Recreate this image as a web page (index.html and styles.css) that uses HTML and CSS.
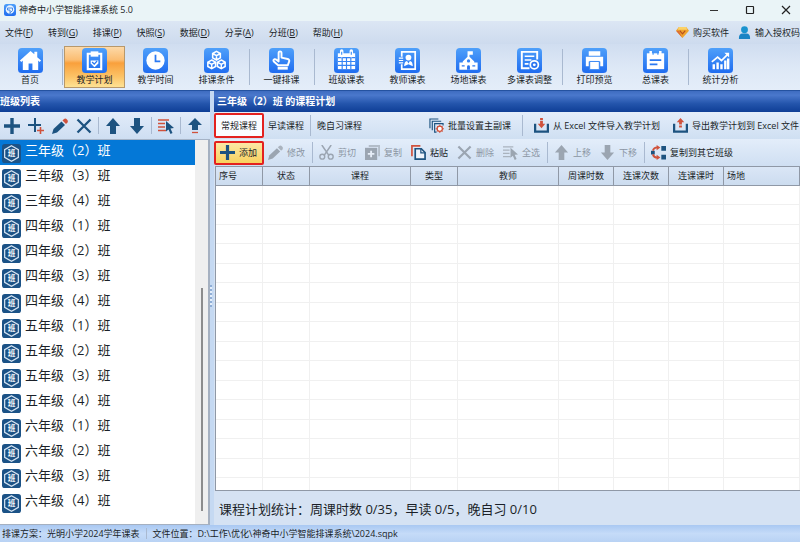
FILE: index.html
```
<!DOCTYPE html>
<html lang="zh-CN">
<head>
    <meta charset="UTF-8">
    <meta name="viewport" content="width=device-width, initial-scale=1.0">
    <title>神奇中小学智能排课系统 5.0</title>
    <link rel="stylesheet" href="styles.css">
</head>
<body>

    <!-- Shared icons -->
    <svg class="defs" width="0" height="0" aria-hidden="true">
        <linearGradient id="blue" x1="0" y1="0" x2="0" y2="1">
            <stop offset="0" stop-color="#4fa0fa"/>
            <stop offset="1" stop-color="#1f6cf0"/>
        </linearGradient>
        <symbol id="plus" viewBox="0 0 16 16"><path d="M8 0v16M0 8h16" stroke="#1d5380" stroke-width="3.400"/></symbol>
        <symbol id="plus-small" viewBox="0 0 16 16"><path d="M7 0v14M0 7h13" stroke="#1d5380" stroke-width="2"/><path d="M12.500 9v7M9 12.500h7" stroke="#d0523c" stroke-width="1.600"/></symbol>
        <symbol id="pencil" viewBox="0 0 16 16"><path d="M0 16l1.500-5L9.500 3.500l3.500 3.500L5 14.500z" fill="var(--main)"/><path d="M10.500 2.500L12 1q1.500-1 3 .500t.500 3L14 6z" fill="var(--accent)"/></symbol>
        <symbol id="cross" viewBox="0 0 16 16"><path d="M1.500 1.500l13 13M14.500 1.500l-13 13" stroke="var(--main)" stroke-width="2.300"/></symbol>
        <symbol id="up" viewBox="0 0 16 16"><path d="M8 0l7 8h-4v8H5V8H1z" fill="var(--main)"/></symbol>
        <symbol id="down" viewBox="0 0 16 16"><path d="M8 16l7-8h-4V0H5v8H1z" fill="var(--main)"/></symbol>
        <symbol id="select" viewBox="0 0 16 16"><path d="M0 2h11M0 5.500h7M0 9h7M0 12.500h8" stroke="var(--accent)" stroke-width="1.300"/><path d="M8 3l8 7-3.500.500 2 4.500-2 1-2-4.500L8 13.500z" fill="var(--main)"/></symbol>
        <symbol id="upload" viewBox="0 0 16 16"><path d="M8 0l7 7h-4v5H5V7H1z" fill="#1d5380"/><path d="M5 14.500h6" stroke="#d0523c" stroke-width="1.300"/></symbol>
    </svg>

    <header class="title-bar">
        <svg class="logo" viewBox="0 0 24 24"><rect width="24" height="24" rx="5" fill="url(#blue)"/><circle cx="12" cy="11" r="8.500" fill="#e9f4ff"/><path d="M7 8h10v5q-3 4-5 4v-5H7zM12 17v4M9 21h6" fill="none" stroke="#377fe4" stroke-width="1.800"/></svg>
        <h1>神奇中小学智能排课系统 5.0</h1>
        <div class="window-controls">
            <button aria-label="最小化"><svg viewBox="0 0 10 10"><path d="M1 5.500h8" stroke="#333"/></svg></button>
            <button aria-label="最大化"><svg viewBox="0 0 10 10"><rect x="1.500" y="1.500" width="7" height="7" rx=".500" fill="none" stroke="#222" stroke-width="1.200"/></svg></button>
            <button aria-label="关闭"><svg viewBox="0 0 10 10"><path d="M1 1l8 8M9 1L1 9" stroke="#222" stroke-width="1.200"/></svg></button>
        </div>
    </header>

    <nav class="menu-bar">
        <button>文件(<u>F</u>)</button>
        <button>转到(<u>G</u>)</button>
        <button>排课(<u>P</u>)</button>
        <button>快照(<u>S</u>)</button>
        <button>数据(<u>D</u>)</button>
        <button>分享(<u>A</u>)</button>
        <button>分班(<u>B</u>)</button>
        <button>帮助(<u>H</u>)</button>
        <div class="account">
            <a href="#buy"><svg viewBox="0 0 14 14"><path d="M3 1h8l3 4-7 8-7-8z" fill="#f0a52e"/><path d="M3 1h8l1 3H2z" fill="#fbd268"/><path d="M7 13L0 5h3z" fill="#dc6c35"/><path d="M4 5l3 3.500L10 5" fill="none" stroke="#b8501e" stroke-width="1.300"/></svg>购买软件</a>
            <a href="#license"><svg viewBox="0 0 14 14"><circle cx="7" cy="4" r="3.700" fill="#1a93cf"/><path d="M1 14q-.500-6 4-6h4q4.500 0 4 6z" fill="#1a84c4"/></svg>输入授权码</a>
        </div>
    </nav>

    <div class="toolbar">
        <button class="tool home"><svg viewBox="0 0 26 26"><rect width="26" height="26" rx="4" fill="url(#blue)"/><path d="M2 13L13 3l4 3.500V4h3v5.500L24 13l-1.500 1.500L21 13v10h-6v-7h-4v7H5V13l-1.500 1.500z" fill="#fff"/></svg>首页</button>
        <i class="sep"></i>
        <button class="tool active"><svg viewBox="0 0 26 26"><rect width="26" height="26" rx="4" fill="url(#blue)"/><path d="M6 6h14v16H6z" fill="none" stroke="#fff" stroke-width="2.200"/><path d="M9 3.500h8V9H9z" fill="#fff"/><path d="M9 13h8v3l-4 4-4-4z" fill="#fff"/><path d="M10.500 14.500l2.200 2.200 3-3.200" fill="none" stroke="#2b79f2" stroke-width="1.300"/></svg>教学计划</button>
        <button class="tool"><svg viewBox="0 0 26 26"><rect width="26" height="26" rx="4" fill="url(#blue)"/><circle cx="13" cy="13" r="9.500" fill="#fff"/><path d="M13 7v7h5" fill="none" stroke="#2b79f2" stroke-width="1.800"/></svg>教学时间</button>
        <button class="tool"><svg viewBox="0 0 26 26"><rect width="26" height="26" rx="4" fill="url(#blue)"/><g fill="none" stroke="#fff" stroke-width="1.600"><path d="M13 3.500l4 2.200v4.500l-4 2.300-4-2.300V5.700zM9 5.700l4 2.300 4-2.300M13 8v4.500"/><path d="M8 12.500l4 2.200v4.500l-4 2.300-4-2.300v-4.500zM4 14.700L8 17l4-2.300M8 17v4.500M18 12.500l4 2.200v4.500l-4 2.300-4-2.300v-4.500zM14 14.700l4 2.300 4-2.300M18 17v4.500"/></g></svg>排课条件</button>
        <i class="sep"></i>
        <button class="tool"><svg viewBox="0 0 26 26"><rect width="26" height="26" rx="4" fill="url(#blue)"/><path d="M10 14V5.500q0-2 1.500-2t1.500 2V10l6.500 1.500q2 .500 1.500 2.500l-1.500 4H9.500L5 14q-1-1.500.500-2.300 1.200-.500 2.500.800z" fill="none" stroke="#fff" stroke-width="2" stroke-linejoin="round"/><path d="M9 19.500h10.500v3H9z" fill="#fff"/></svg>一键排课</button>
        <i class="sep"></i>
        <button class="tool"><svg viewBox="0 0 26 26"><rect width="26" height="26" rx="4" fill="url(#blue)"/><path d="M4 5.500h18V22H4z" fill="#fff"/><path d="M4 10h18M4 14h18M4 18h18M8.500 10v12M13 10v12M17.500 10v12" stroke="#3584f5" stroke-width="1.200"/><path d="M8 3v5M18 3v5" stroke="#fff" stroke-width="3.600" stroke-linecap="round"/><path d="M8 4v3M18 4v3" stroke="#3f92f8" stroke-width="1.200"/></svg>班级课表</button>
        <button class="tool"><svg viewBox="0 0 26 26"><rect width="26" height="26" rx="4" fill="url(#blue)"/><path d="M7 9V4h14v18H7v-5" fill="none" stroke="#fff" stroke-width="1.800"/><path d="M4 10.500h4.500M4 13h4.500M4 15.500h4.500" stroke="#fff" stroke-width="1.200"/><circle cx="14" cy="10" r="3" fill="#fff"/><path d="M9.500 19q0-5 3-5.500L14 16l1.500-2.500q3 .500 3 5.500l-4.500-2z" fill="#fff"/></svg>教师课表</button>
        <button class="tool"><svg viewBox="0 0 26 26"><rect width="26" height="26" rx="4" fill="url(#blue)"/><path d="M12 9V3.500h5.500V7H14v2l5 5v1h3.500v7.500h-19V15H7v-1z" fill="#fff"/><path d="M11.500 22.500v-3q0-1.500 1.500-1.500t1.500 1.500v3z" fill="#2873f1"/><circle cx="13" cy="13.500" r="1.700" fill="#3584f5"/><path d="M6 18.500h3M17 18.500h3" stroke="#2b79f2" stroke-width="1.300"/></svg>场地课表</button>
        <button class="tool"><svg viewBox="0 0 26 26"><rect width="26" height="26" rx="4" fill="url(#blue)"/><path d="M13 21H5V4h16v8" fill="none" stroke="#fff" stroke-width="2"/><path d="M8 8.500h10M8 12.500h7M8 16.500h4" stroke="#fff" stroke-width="1.600"/><circle cx="18" cy="17.500" r="4.200" fill="#2873f1" stroke="#fff" stroke-width="1.800"/><circle cx="18" cy="17.500" r="1.500" fill="#fff"/></svg>多课表调整</button>
        <i class="sep"></i>
        <button class="tool"><svg viewBox="0 0 26 26"><rect width="26" height="26" rx="4" fill="url(#blue)"/><path d="M7 3.500h12V8H7zM4 9h18v10h-3v-5H7v5H4z" fill="#fff"/><path d="M8 14h10v8.500H8z" fill="#fff" stroke="#3584f5"/></svg>打印预览</button>
        <button class="tool"><svg viewBox="0 0 26 26"><rect width="26" height="26" rx="4" fill="url(#blue)"/><path d="M4 5.500h18V22H4z" fill="#fff"/><path d="M8 3v5M18 3v5" stroke="#fff" stroke-width="2.600"/><path d="M10.500 4v3M15.500 4v3" stroke="#3f92f8" stroke-width="1.200"/><path d="M7 12.500h12M7 17h8" stroke="#2b79f2" stroke-width="1.800"/></svg>总课表</button>
        <i class="sep"></i>
        <button class="tool"><svg viewBox="0 0 26 26"><rect width="26" height="26" rx="4" fill="url(#blue)"/><path d="M6 22v-5M10 22v-7M14 22v-5M18 22v-9M21 22V11" stroke="#fff" stroke-width="2.500"/><path d="M4 14.500l6-5 4 3.500 7-7" fill="none" stroke="#fff" stroke-width="1.800"/><path d="M17 5h5v5z" fill="#fff"/></svg>统计分析</button>
    </div>

    <main class="workspace">
        <section class="class-panel">
            <h2 class="panel-title">班级列表</h2>
            <div class="class-tools">
                <button aria-label="添加"><svg><use href="#plus"/></svg></button>
                <button aria-label="批量添加"><svg><use href="#plus-small"/></svg></button>
                <button aria-label="修改"><svg><use href="#pencil"/></svg></button>
                <button aria-label="删除"><svg><use href="#cross"/></svg></button>
                <i class="sep"></i>
                <button aria-label="上移"><svg><use href="#up"/></svg></button>
                <button aria-label="下移"><svg><use href="#down"/></svg></button>
                <i class="sep"></i>
                <button aria-label="全选"><svg><use href="#select"/></svg></button>
                <i class="sep"></i>
                <button aria-label="升级"><svg><use href="#upload"/></svg></button>
            </div>
            <div class="class-box">
                <ul class="class-list" id="class-list"></ul>
                <div class="scroll-track"><div class="scroll-thumb"></div></div>
            </div>
        </section>

        <div class="splitter"><span></span></div>

        <section class="plan-panel">
            <h2 class="panel-title">三年级（2）班 的课程计划</h2>
            <div class="tab-row">
                <button class="tab marked">常规课程</button>
                <button class="tab">早读课程</button>
                <i class="sep"></i>
                <button class="tab">晚自习课程</button>
                <div class="plan-links">
                    <button class="action"><svg viewBox="0 0 16 16"><path d="M1 11V1h9M3.500 13V3.500H13M8 15H6V6h9v2" fill="none" stroke="#1d5380" stroke-width="1.200"/><circle cx="11.500" cy="11.500" r="2.800" fill="#fff" stroke="#d0523c" stroke-width="1.400"/><path d="M11.500 7v2M11.500 14v2M7 11.500h2M14 11.500h2M8.500 8.500l1 1M13.500 13.500l1 1M14.500 8.500l-1 1M9.500 13.500l-1 1" stroke="#d0523c"/></svg>批量设置主副课</button>
                    <i class="sep"></i>
                    <button class="action"><svg viewBox="0 0 16 16"><path d="M1.200 6v8.500h13.600V6" fill="none" stroke="#1d5380" stroke-width="2.400"/><path d="M6.500 0h3v2h-3zM6.500 3h3v3H12l-4 5-4-5h2.500z" fill="#d0523c"/></svg>从 Excel 文件导入教学计划</button>
                    <button class="action"><svg viewBox="0 0 16 16"><path d="M1.200 6v8.500h13.600V6" fill="none" stroke="#1d5380" stroke-width="2.400"/><path d="M8 0l4 4.500H9.500V7h-3V4.500H4zM6.500 8h3v2h-3z" fill="#d0523c"/></svg>导出教学计划到 Excel 文件</button>
                </div>
            </div>
            <div class="action-row">
                <button class="action add marked"><svg><use href="#plus"/></svg>添加</button>
                <button class="action" disabled><svg><use href="#pencil"/></svg>修改</button>
                <i class="sep"></i>
                <button class="action" disabled><svg viewBox="0 0 16 16"><path d="M3 0l7.500 11M13 0L5.500 11" stroke="#9ba5b1" stroke-width="1.600"/><circle cx="3.500" cy="12.500" r="2.600" fill="none" stroke="#9ba5b1" stroke-width="1.500"/><circle cx="12.500" cy="12.500" r="2.600" fill="none" stroke="#9ba5b1" stroke-width="1.500"/></svg>剪切</button>
                <button class="action" disabled><svg viewBox="0 0 16 16"><path d="M4 0h12v12h-2V2H4z" fill="#b3bdc9"/><path d="M0 3h13v13H0z" fill="#9ba5b1"/><path d="M6.500 6v7M3 9.500h7" stroke="#e6edf7" stroke-width="2"/></svg>复制</button>
                <button class="action"><svg viewBox="0 0 16 16"><path d="M1 12V1h9" fill="none" stroke="#d0523c" stroke-width="1.800"/><path d="M4.500 4H11l4 4v7H4.500z" fill="#eef4fc" stroke="#1d5380" stroke-width="1.800"/><path d="M10.500 4v4.500H15" fill="none" stroke="#1d5380" stroke-width="1.300"/></svg>粘贴</button>
                <button class="action" disabled><svg><use href="#cross"/></svg>删除</button>
                <button class="action" disabled><svg><use href="#select"/></svg>全选</button>
                <i class="sep"></i>
                <button class="action" disabled><svg><use href="#up"/></svg>上移</button>
                <button class="action" disabled><svg><use href="#down"/></svg>下移</button>
                <i class="sep"></i>
                <button class="action"><svg viewBox="0 0 16 16"><path d="M11 1h5v5h-5zM11 10.500h5v5h-5zM0 6h4v4H0z" fill="#1d5380"/><path d="M2 6q1-3.500 5-3.500M2 10q1 3.500 5 3.500" fill="none" stroke="#d0523c" stroke-width="2"/><path d="M6 0l4 2.700L6 5.500zM6 10.500l4 2.800L6 16z" fill="#d0523c"/></svg>复制到其它班级</button>
            </div>
            <div class="table-container">
                <table>
                    <colgroup>
                        <col class="col-no"><col class="col-no"><col class="col-wide"><col class="col-no"><col class="col-wide">
                        <col class="col-count"><col class="col-count"><col class="col-count"><col>
                    </colgroup>
                    <thead>
                        <tr>
                            <th class="left">序号</th>
                            <th>状态</th>
                            <th>课程</th>
                            <th>类型</th>
                            <th>教师</th>
                            <th>周课时数</th>
                            <th>连课次数</th>
                            <th>连课课时</th>
                            <th class="left">场地</th>
                        </tr>
                    </thead>
                    <tbody id="plan-rows"></tbody>
                </table>
            </div>
            <p class="summary">课程计划统计：周课时数 0/35，早读 0/5，晚自习 0/10</p>
        </section>
    </main>

    <footer class="status-bar">
        <span>排课方案：光明小学2024学年课表</span>
        <i class="sep"></i>
        <span>文件位置：D:\工作\优化\神奇中小学智能排课系统\2024.sqpk</span>
    </footer>

    <script>
        const classes = [
            '三年级（2）班', '三年级（3）班', '三年级（4）班',
            '四年级（1）班', '四年级（2）班', '四年级（3）班', '四年级（4）班',
            '五年级（1）班', '五年级（2）班', '五年级（3）班', '五年级（4）班',
            '六年级（1）班', '六年级（2）班', '六年级（3）班', '六年级（4）班'
        ];

        // Class list, first one selected
        const list = document.getElementById('class-list');
        classes.forEach((name, i) => {
            const li = document.createElement('li');
            if (i === 0) li.className = 'selected';
            li.innerHTML = `
                <svg viewBox="0 0 20 20" aria-hidden="true">
                    <rect width="20" height="20" rx="3" fill="#1b5286"/>
                    <path d="M10 1.800l7.200 4.100v8.200L10 18.200l-7.200-4.100V5.900z" fill="none" stroke="#d5e4f2" stroke-width="1.300"/>
                    <text class="badge" x="10" y="13" text-anchor="middle">班</text>
                </svg>
                <span>${name}</span>
            `;
            list.appendChild(li);
        });

        // Empty grid rows
        const tbody = document.getElementById('plan-rows');
        for (let i = 0; i < 16; i++) {
            const tr = document.createElement('tr');
            tr.innerHTML = '<td></td>'.repeat(9);
            tbody.appendChild(tr);
        }
    </script>

</body>
</html>
```
FILE: styles.css
```
* {
    box-sizing: border-box;
}

body {
    --main: #1d5380;
    --accent: #d0523c;
    display: flex;
    flex-direction: column;
    height: 100vh;
    margin: 0;
    overflow: hidden;
    background-color: #d5e2f3;
    color: #1a1f28;
    font-family: "Open Sans", "Noto Sans CJK SC", sans-serif;
    font-size: 9px;
    line-height: 12px;
    white-space: nowrap;
}

button {
    padding: 0;
    border: none;
    background: none;
    color: inherit;
    font: inherit;
    white-space: nowrap;
}

a {
    color: inherit;
    text-decoration: none;
}

svg {
    display: block;
    flex: none;
}

.defs {
    position: absolute;
}

.sep {
    flex: none;
    align-self: stretch;
    width: 5px;
    margin: 3px 0;
    background: linear-gradient(#a9b9d0, #a9b9d0) center / 1px 100% no-repeat;
}

/* Title bar */
.title-bar {
    display: flex;
    flex: none;
    align-items: center;
    height: 21px;
    padding: 0 4px 2px;
    background-color: #eaf4f7;
}

.logo {
    width: 12px;
    height: 12px;
}

.title-bar h1 {
    margin: 0 0 0 3px;
    font-size: 9px;
    font-weight: normal;
}

.window-controls {
    display: flex;
    gap: 26px;
    margin-left: auto;
    padding-right: 5px;
}

.window-controls svg {
    width: 10px;
    height: 10px;
}

/* Menu */
.menu-bar {
    display: flex;
    flex: none;
    align-items: center;
    gap: 15px;
    height: 23px;
    padding: 0 0 0 5px;
    background: linear-gradient(#dce6f4, #cddbee);
}

.account {
    display: flex;
    gap: 9px;
    margin-left: auto;
}

.account a {
    display: flex;
    align-items: center;
    gap: 4px;
}

.account svg {
    width: 13px;
    height: 13px;
}

/* Main toolbar */
.toolbar {
    display: flex;
    flex: none;
    height: 47px;
    padding: 2px 0;
    background: linear-gradient(#d0ddf0, #dde8f6 50%, #e4edf9);
    border-bottom: 1px solid #2452a0;
}

.toolbar .sep {
    width: 4px;
}

.tool {
    display: flex;
    flex: none;
    flex-direction: column;
    align-items: center;
    gap: 1px;
    width: 61px;
    padding-top: 2px;
}

.tool svg {
    width: 25px;
    height: 25px;
}

.home {
    width: 60px;
}

.tool.active {
    padding-top: 1px;
    border: 1px solid #b8986a;
    background: linear-gradient(#fdd9a8, #fbbd72 32%, #f9a03c 40%, #fcc468 75%, #fee294);
}

/* Panels */
.workspace {
    display: flex;
    flex: 1;
    min-height: 0;
}

.class-panel {
    display: flex;
    flex: none;
    flex-direction: column;
    width: 210px;
}

.plan-panel {
    display: flex;
    flex: 1;
    flex-direction: column;
    min-width: 0;
}

.panel-title {
    flex: none;
    height: 21px;
    margin: 0;
    padding: 0 3px;
    background: linear-gradient(#3e6cc0, #4a78cc 20%, #2455ac 60%, #0f3e96);
    color: #fff;
    font-size: 10px;
    font-weight: bold;
    line-height: 20px;
}

.class-panel .panel-title {
    padding-left: 0;
}

.splitter {
    display: flex;
    flex: none;
    align-items: center;
    width: 4px;
    background-color: #c5d9f2;
}

.splitter span {
    width: 2px;
    height: 22px;
    margin-top: -24px;
    background: repeating-linear-gradient(#8faed6 0 2px, #e4eefa 2px 4px);
}

.class-tools {
    display: flex;
    flex: none;
    align-items: center;
    height: 28px;
    background: linear-gradient(#e2ecf9, #cedef2);
    border-bottom: 1px solid #a5b3c6;
}

.class-tools button {
    display: flex;
    flex: none;
    justify-content: center;
    width: 24px;
}

.class-tools svg {
    width: 16px;
    height: 16px;
}

.class-tools .sep {
    margin: 5px 0;
}

.class-box {
    display: flex;
    flex: 1;
    min-height: 0;
    background-color: #fff;
    border-right: 2px solid #a5b0c0;
    border-bottom: 1px solid #a5b0c0;
}

.class-list {
    flex: 1;
    margin: 0;
    padding: 0;
    overflow: hidden;
    list-style: none;
    font-size: 13px;
}

.class-list li {
    display: flex;
    gap: 4px;
    height: 25px;
    padding: 2px 2px 0;
    line-height: 16px;
}

.class-list svg {
    width: 19px;
    height: 19px;
    margin-top: 2px;
}

.badge {
    fill: #fff;
    font-size: 8px;
    font-weight: bold;
}

.class-list .selected {
    background-color: #0478d7;
    color: #fff;
}

.scroll-track {
    display: flex;
    flex: none;
    align-items: flex-end;
    justify-content: center;
    width: 13px;
    padding-bottom: 13px;
    background-color: #efefef;
}

.scroll-thumb {
    width: 2px;
    height: 60%;
    background-color: #8c8c8c;
}

/* Course plan */
.tab-row,
.action-row {
    display: flex;
    flex: none;
    align-items: center;
    height: 27px;
    background: linear-gradient(#e3edfa, #cfdff2);
}

.tab {
    height: 25px;
    padding: 0 4px;
}

.marked {
    border: 2px solid #e3211f;
    border-radius: 2px;
}

.tab.marked {
    width: 50px;
    background-color: #fafcff;
}

.plan-links {
    display: flex;
    align-items: center;
    align-self: stretch;
    gap: 5px;
    margin-left: auto;
}

.action {
    display: flex;
    flex: none;
    align-items: center;
    gap: 4px;
    padding: 0 4px;
}

.action svg {
    width: 15px;
    height: 15px;
}

.action-row .action {
    min-width: 46px;
}

.action-row .add {
    width: 50px;
    height: 24px;
    background: linear-gradient(#fbe7a6, #f9d25e);
}

.action:disabled {
    --main: #9ba5b1;
    --accent: #aab3be;
    color: #8b95a3;
}

.plan-links .action:last-child {
    padding-right: 1px;
}

.table-container {
    flex: 1;
    min-height: 0;
    margin-left: 1px;
    overflow: hidden;
    background-color: #fff;
    border: 1px solid #8f98a6;
    border-right: none;
}

table {
    width: 100%;
    table-layout: fixed;
    border-collapse: separate;
    border-spacing: 0;
}

.col-no {
    width: 47px;
}

.col-wide {
    width: 101px;
}

.col-count {
    width: 55px;
}

th {
    height: 19px;
    padding: 0;
    background: linear-gradient(#dae6f6, #ccdcef);
    border-right: 1px solid #8f98a6;
    border-bottom: 1px solid #8f98a6;
    font-weight: normal;
}

th.left {
    padding-left: 3px;
    text-align: left;
}

td {
    height: 19px;
    padding: 0;
    border-right: 1px solid #f0f0f0;
    border-bottom: 1px solid #f0f0f0;
}

tr:nth-child(even) td {
    height: 20px;
}

.summary {
    flex: none;
    margin: 0;
    padding: 10px 5px 8px;
    font-size: 13px;
    line-height: 16px;
}

/* Status bar */
.status-bar {
    display: flex;
    flex: none;
    align-items: center;
    gap: 4px;
    height: 17px;
    padding: 0 2px;
    background: linear-gradient(#a9c8f2, #c5dbf8 50%, #b8d2f4);
}
```
